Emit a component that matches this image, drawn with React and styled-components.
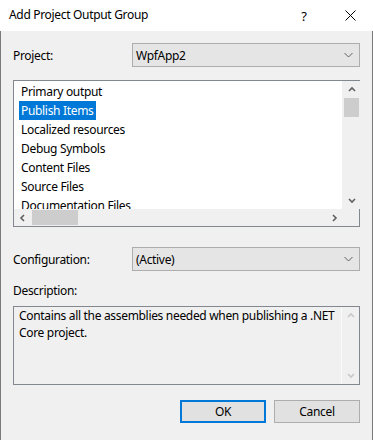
import styled, { createGlobalStyle } from "styled-components";

const Global = createGlobalStyle`
  html, body { margin: 0; padding: 0; background: #f0f0f0; }
  body {
    font-family: "Noto Sans", "Open Sans", sans-serif;
    font-size: 12px;
    letter-spacing: -0.32px;
    color: #000;
  }
`;

const Window = styled.div`
  width: 373px;
  height: 440px;
  display: flex;
  flex-direction: column;
  background: #f0f0f0;
  overflow: hidden;
`;

const TitleBar = styled.div`
  height: 31px;
  flex: none;
  background: #fff;
  display: flex;
  align-items: center;
  padding-left: 9px;
`;

const Title = styled.div`
  flex: 1;
  font-size: 12px;
  margin-top: -2px;
`;

const CaptionButton = styled.div`
  width: 46px;
  height: 31px;
  display: flex;
  align-items: center;
  justify-content: center;
  font-size: 13px;
`;

const Body = styled.div`
  flex: 1;
  display: flex;
  flex-direction: column;
  padding: 12px 12px 0 12px;
  border-left: 1px solid #7a7a7a;
  border-right: 1px solid #7a7a7a;
`;

const Row = styled.div`
  display: flex;
  align-items: center;
  height: 24px;
  margin-top: ${(p) => p.$mt || 0}px;
`;

const Label = styled.div`
  width: 119px;
  flex: none;
`;

const Combo = styled.div`
  flex: 1;
  height: 22px;
  background: #e5e5e5;
  border: 1px solid #adadad;
  display: flex;
  align-items: center;
  padding-left: 3px;
  padding-right: 6px;
  svg { margin-left: auto; }
`;

const ListBox = styled.div`
  margin-top: 13px;
  height: 145px;
  border: 1px solid #828790;
  background: #fff;
  display: grid;
  grid-template-columns: 1fr 17px;
  grid-template-rows: 1fr 17px;
`;

const Items = styled.div`
  overflow: hidden;
  padding: 1px 0 0 5px;
  display: flex;
  flex-direction: column;
  align-items: flex-start;
`;

const Item = styled.div`
  height: 19px;
  line-height: 19px;
  padding: 0 2px;
  white-space: nowrap;
  background: ${(p) => (p.$selected ? "#0078d7" : "transparent")};
  color: ${(p) => (p.$selected ? "#fff" : "#000")};
`;

const VScroll = styled.div`
  width: 17px;
  background: #f0f0f0;
  display: flex;
  flex-direction: column;
  align-items: center;
  border-left: 1px solid ${(p) => (p.$disabled ? "#fafafa" : "#f0f0f0")};
`;

const HScroll = styled.div`
  background: #f0f0f0;
  display: flex;
  align-items: center;
`;

const Arrow = styled.div`
  width: 17px;
  height: 17px;
  flex: none;
  display: flex;
  align-items: center;
  justify-content: center;
`;

const VThumb = styled.div`
  width: 15px;
  height: 19px;
  background: #cdcdcd;
`;

const HThumb = styled.div`
  width: 46px;
  height: 15px;
  background: #cdcdcd;
  margin-left: 1px;
`;

const Track = styled.div`
  flex: 1;
`;

const Corner = styled.div`
  background: #f0f0f0;
`;

const DescLabel = styled.div`
  margin-top: 11px;
  height: 18px;
  line-height: 18px;
`;

const DescBox = styled.div`
  margin-top: 6px;
  height: 77px;
  border: 1px solid #828790;
  display: flex;
`;

const DescText = styled.div`
  flex: 1;
  padding: 0 0 0 5px;
  line-height: 17px;
`;

const Buttons = styled.div`
  display: flex;
  justify-content: flex-end;
  gap: 8px;
  margin-top: 15px;
`;

const Button = styled.div`
  width: 86px;
  height: 23px;
  box-sizing: border-box;
  background: #e1e1e1;
  border: ${(p) => (p.$default ? "2px solid #0078d7" : "1px solid #adadad")};
  display: flex;
  align-items: center;
  justify-content: center;
`;

const Chevron = ({ dir = "down", color = "#606060", w = 8 }) => {
  const paths = {
    down: "M1 2 L4 5 L7 2",
    up: "M1 5 L4 2 L7 5",
    left: "M5 1 L2 4 L5 7",
    right: "M3 1 L6 4 L3 7",
  };
  return (
    <svg width={w} height={w} viewBox="0 0 8 8">
      <path d={paths[dir]} fill="none" stroke={color} strokeWidth="1.6" />
    </svg>
  );
};

const ComboArrow = () => (
  <svg width="9" height="6" viewBox="0 0 9 6">
    <path d="M0.5 1 L4.5 5 L8.5 1" fill="none" stroke="#606060" strokeWidth="1" />
  </svg>
);

const items = [
  "Primary output",
  "Publish Items",
  "Localized resources",
  "Debug Symbols",
  "Content Files",
  "Source Files",
  "Documentation Files",
];

const App = () => (
  <Window>
    <Global />
    <TitleBar>
      <Title>Add Project Output Group</Title>
      <CaptionButton>?</CaptionButton>
      <CaptionButton>
        <svg width="11" height="11" viewBox="0 0 11 11">
          <path d="M0.5 0.5 L10.5 10.5 M10.5 0.5 L0.5 10.5" stroke="#000" strokeWidth="1" />
        </svg>
      </CaptionButton>
    </TitleBar>
    <Body>
      <Row>
        <Label>Project:</Label>
        <Combo>
          WpfApp2
          <ComboArrow />
        </Combo>
      </Row>
      <ListBox>
        <Items>
          {items.map((t, i) => (
            <Item key={t} $selected={i === 1}>
              {t}
            </Item>
          ))}
        </Items>
        <VScroll>
          <Arrow>
            <Chevron dir="up" />
          </Arrow>
          <VThumb />
          <Track />
          <Arrow>
            <Chevron dir="down" />
          </Arrow>
        </VScroll>
        <HScroll>
          <Arrow>
            <Chevron dir="left" />
          </Arrow>
          <HThumb />
          <Track />
          <Arrow>
            <Chevron dir="right" />
          </Arrow>
        </HScroll>
        <Corner />
      </ListBox>
      <Row $mt={20}>
        <Label>Configuration:</Label>
        <Combo>
          (Active)
          <ComboArrow />
        </Combo>
      </Row>
      <DescLabel>Description:</DescLabel>
      <DescBox>
        <DescText>
          Contains all the assemblies needed when publishing a .NET Core project.
        </DescText>
        <VScroll $disabled>
          <Arrow>
            <Chevron dir="up" color="#c8c8c8" />
          </Arrow>
          <Track />
          <Arrow>
            <Chevron dir="down" color="#c8c8c8" />
          </Arrow>
        </VScroll>
      </DescBox>
      <Buttons>
        <Button $default>OK</Button>
        <Button>Cancel</Button>
      </Buttons>
    </Body>
  </Window>
);

export default App;
